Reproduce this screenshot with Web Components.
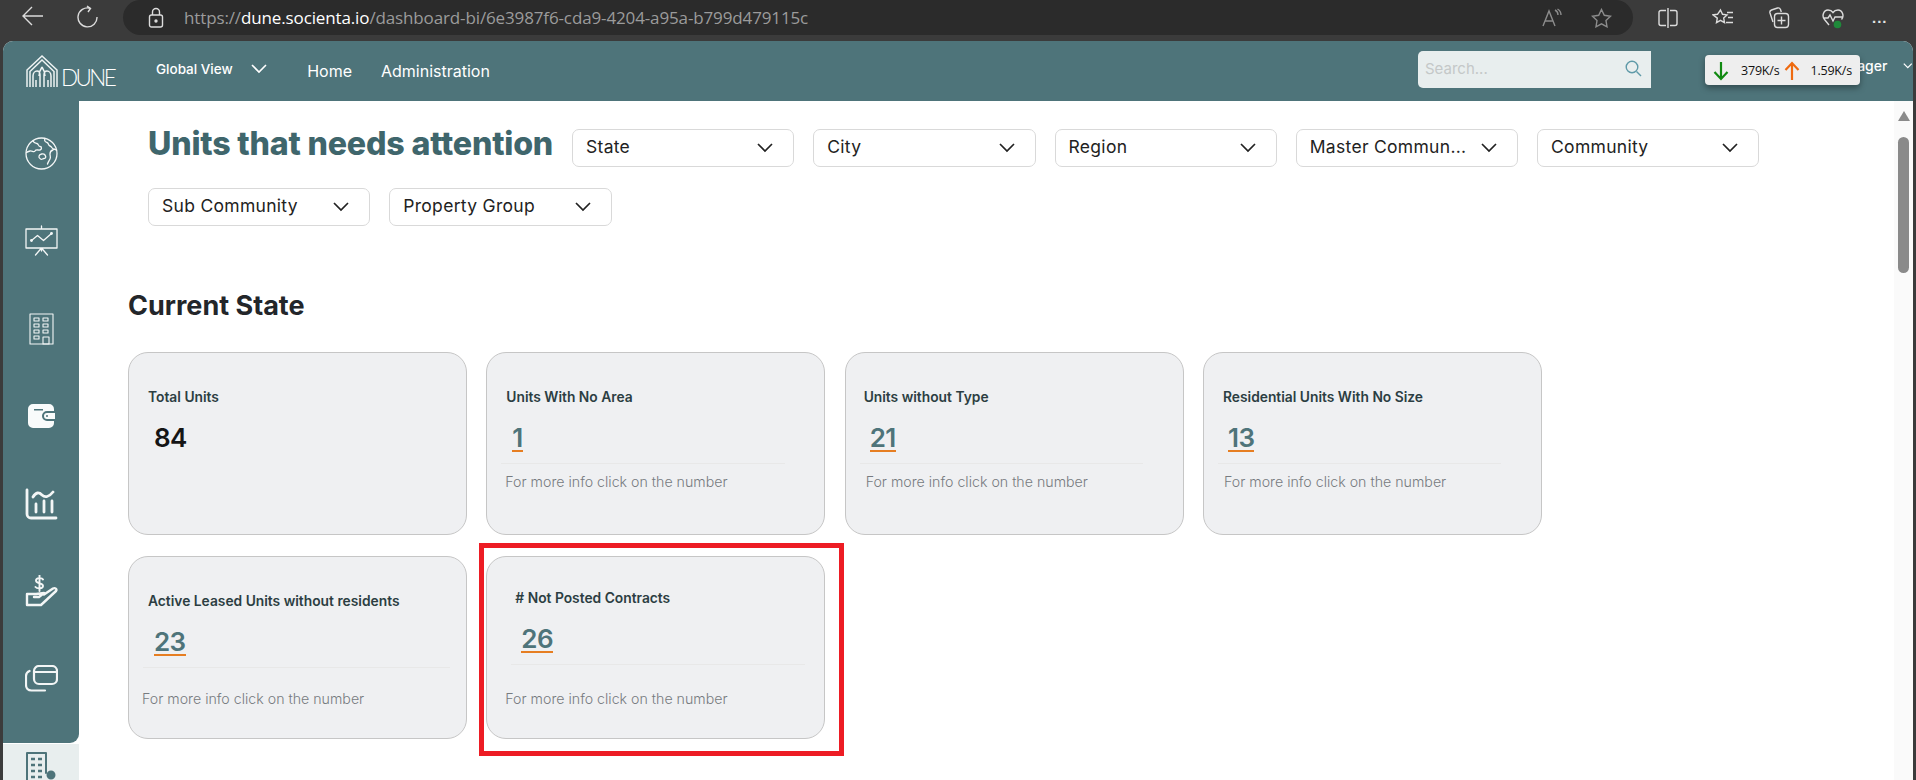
<!DOCTYPE html>
<html lang="en">
<head>
<meta charset="utf-8">
<title>Units that needs attention</title>
<style>
  html, body { height: 100%; margin: 0; overflow: hidden; background: #3b3b3b; }
  body { display: flex; flex-direction: column; font-family: Inter, 'Liberation Sans', sans-serif; }
</style>
</head>
<body>
  <browser-bar></browser-bar>
  <app-window>
    <app-header></app-header>
    <side-nav></side-nav>
    <units-page></units-page>
    <page-scrollbar></page-scrollbar>
  </app-window>

<script>
class BrowserBar extends HTMLElement {
  constructor () {
    super()
    this.shadow = this.attachShadow({ mode: 'open' })
  }

  connectedCallback () {
    this.shadow.innerHTML =
    /* html */`
    <style>
      :host {
        align-items: flex-start;
        background: #3b3b3b;
        display: flex;
        flex: 0 0 41px;
        height: 41px;
      }
      svg { display: block; fill: none; stroke: #dcdcdc; stroke-width: 1.4; }
      .nav { display: flex; gap: 33px; margin: 5px 0 0 21px; width: 102px; }
      .address {
        align-items: center;
        background: #2b2b2b;
        border-radius: 18px;
        display: flex;
        height: 35px;
        width: 1510px;
      }
      .lock { margin-left: 25px; }
      .url {
        color: #9b9b9b;
        flex: 1;
        font-family: 'Open Sans', sans-serif;
        font-size: 17px;
        letter-spacing: -.13px;
        margin-left: 20px;
      }
      .url b { color: #fff; font-weight: 400; }
      .inner { display: flex; gap: 29px; margin-right: 21px; }
      .inner svg { stroke: #8c8c8c; }
      .tools { align-items: center; display: flex; gap: 34px; height: 35px; margin-left: 25px; }
      .heart { margin-left: -2px; }
      .dots { color: #e4e4e4; font: 700 15px 'Liberation Sans', sans-serif; letter-spacing: 1px; margin-left: -6px; }
    </style>
    <div class="nav">
      <svg width="23" height="22" viewBox="0 0 23 22"><path d="M22 11H2M11 2l-9 9 9 9"/></svg>
      <svg width="22" height="24" viewBox="0 0 22 24"><path d="M13 3.2A9.5 9.5 0 1 0 20 12M10 1l3.5 2.4L11 7"/></svg>
    </div>
    <div class="address">
      <svg class="lock" width="16" height="22" viewBox="0 0 16 22"><rect x="1.5" y="8" width="13" height="12" rx="2"/><path d="M4.5 8V5a3.5 3.5 0 0 1 7 0v3"/><circle cx="8" cy="14" r="1" fill="#dcdcdc"/></svg>
      <span class="url">https://<b>dune.socienta.io</b>/dashboard-bi/6e3987f6-cda9-4204-a95a-b799d479115c</span>
      <div class="inner">
        <svg width="20" height="20" viewBox="0 0 20 20"><path d="M1 18 7 3l6 15M3.2 13h7.6M13 2c2 1 3 3 3 5M15.500 1c2.500 1.500 3.500 4 3.500 6"/></svg>
        <svg width="21" height="20" viewBox="0 0 21 20"><path d="m10.500 1.500 2.800 5.800 6.200.9-4.500 4.400 1 6.200-5.500-2.900L5 18.800l1-6.200-4.500-4.400 6.200-.9z"/></svg>
      </div>
    </div>
    <div class="tools">
      <svg width="20" height="20" viewBox="0 0 20 20"><path d="M8 2.500H3a2 2 0 0 0-2 2v11a2 2 0 0 0 2 2h5M12 2.500h5a2 2 0 0 1 2 2v11a2 2 0 0 1-2 2h-5M10 0v20"/></svg>
      <svg width="22" height="20" viewBox="0 0 22 20"><path d="m8.500 2 2 4.300 4.500.6-3.300 3.200.8 4.500-4-2.200-4 2.200.8-4.500L1 6.900l4.500-.6zM15 4.500h6M16 9.500h5M14 14.500h7"/></svg>
      <svg width="22" height="22" viewBox="0 0 22 22"><path d="M5 15 2 6c-.4-1.300.3-2.500 1.500-3l6-2c1.300-.4 2.500.3 3 1.500l.8 2.500"/><rect x="6.500" y="6.500" width="14" height="14" rx="3"/><path d="M13.500 9.500v8M9.500 13.500h8"/></svg>
      <svg class="heart" width="22" height="22" viewBox="0 0 22 22"><path d="M7 18 2.500 12.500C-.500 9 1.500 3 6 3c2.500 0 4 1 5 2.500C12 4 13.500 3 16 3c4.500 0 6.500 6 3.500 9.500M1 11h5l2-3 3 6 2-4h8"/><circle cx="15.500" cy="17.500" r="3.800" fill="#1f8a3a" stroke="none"/></svg>
      <span class="dots">...</span>
    </div>
    `
  }
}

class AppWindow extends HTMLElement {
  constructor () {
    super()
    this.shadow = this.attachShadow({ mode: 'open' })
  }

  connectedCallback () {
    this.shadow.innerHTML =
    /* html */`
    <style>
      :host {
        background: #fff;
        border-radius: 10px 10px 0 0;
        display: grid;
        flex: 1;
        grid-template-columns: 76px 1fr 19px;
        grid-template-rows: 60px 1fr;
        margin: 0 3px;
        min-height: 0;
        overflow: hidden;
      }
    </style>
    <slot></slot>
    `
  }
}

class AppHeader extends HTMLElement {
  constructor () {
    super()
    this.shadow = this.attachShadow({ mode: 'open' })
  }

  connectedCallback () {
    this.shadow.innerHTML =
    /* html */`
    <style>
      :host {
        align-items: center;
        background: #4e747a;
        color: #fff;
        display: flex;
        font-size: 14px;
        font-weight: 500;
        grid-column: 1 / -1;
        position: relative;
      }
      svg { display: block; fill: none; }
      .logo { align-items: flex-end; display: flex; gap: 3px; margin-left: 23px; width: 130px; }
      .logo svg { stroke: #eef3f3; stroke-width: 1.5; }
      .logo span {
        font: 300 22.500px/20px Lato, sans-serif;
        letter-spacing: -2.600px;
      }
      .view { align-items: center; display: flex; gap: 18px; margin-bottom: 4px; font-size: 13.500px; }
      .links { display: flex; gap: 29px; margin-left: 40.500px; font-size: 16px; font-weight: 400; }
      .search {
        align-items: center;
        background: #e8eeee;
        border-radius: 5px 0 0 5px;
        box-sizing: content-box;
        color: #c4c8c8;
        display: flex;
        font-size: 15px;
        font-weight: 400;
        height: 34px;
        justify-content: space-between;
        margin-left: auto;
        margin-top: -3px;
        padding: 0 9px 3px 7px;
        width: 217px;
      }
      .search svg { stroke: #5f9aa8; stroke-width: 1.400; }
      .user { display: flex; align-items: center; gap: 16px; margin: -11px 0 0 177px; width: 85px; white-space: nowrap; }
      .net {
        align-items: center;
        background: #eeeeee;
        border-radius: 4px;
        box-shadow: 0 3px 6px rgba(0,0,0,.35);
        box-sizing: border-box;
        color: #111;
        display: flex;
        font: 400 12.500px 'Open Sans', sans-serif;
        height: 30px;
        left: 1702px;
        letter-spacing: -.2px;
        padding-top: 1px;
        position: absolute;
        top: 14px;
        width: 155px;
      }
      .net svg { stroke-width: 2.200; margin-left: 8px; }
      .net .down { margin-right: 12px; stroke: #118a11; }
      .net .up { margin: 0 10px 0 5px; stroke: #ee6a10; }
    </style>
    <div class="logo">
      <svg width="32" height="33" viewBox="0 0 32 33">
        <path d="M1 32V15L16 1l15 14v17M4 32V16.500L16 5l12 11.500V32"/>
        <path d="M7 32V21c0-3 2-5 4-5s3 2 3 4v12M25 32V21c0-3-2-5-4-5s-3 2-3 4v12M16 12c-2 3-3 6-3 9M16 12c2 3 3 6 3 9M10 32v-7M22 32v-7"/>
      </svg>
      <span>DUNE</span>
    </div>
    <div class="view">Global View
      <svg width="16" height="10" viewBox="0 0 16 10" stroke="#fff" stroke-width="1.600"><path d="m1 1 7 7 7-7"/></svg>
    </div>
    <div class="links"><span>Home</span><span>Administration</span></div>
    <div class="search">Search...
      <svg width="17" height="17" viewBox="0 0 17 17"><circle cx="7" cy="7" r="5.800"/><path d="m11.500 11.500 4.500 4.500"/></svg>
    </div>
    <div class="user">Manager
      <svg width="12" height="8" viewBox="0 0 12 8" stroke="#fff" stroke-width="1.600"><path d="m1 1 5 5 5-5"/></svg>
    </div>
    <div class="net">
      <svg class="down" width="16" height="20" viewBox="0 0 16 20"><path d="M8 1v17M1.500 11 8 18l6.500-7"/></svg>379K/s
      <svg class="up" width="16" height="20" viewBox="0 0 16 20"><path d="M8 19V2M1.500 9 8 2l6.500 7"/></svg>1.59K/s
    </div>
    `
  }
}

class SideNav extends HTMLElement {
  constructor () {
    super()
    this.shadow = this.attachShadow({ mode: 'open' })
  }

  connectedCallback () {
    this.shadow.innerHTML =
    /* html */`
    <style>
      :host { display: flex; flex-direction: column; min-height: 0; overflow: hidden; }
      .rail {
        background: #4e747a;
        border-bottom-right-radius: 9px;
        box-sizing: border-box;
        display: flex;
        flex: 0 0 642px;
        flex-direction: column;
        padding-top: 9px;
      }
      .cell { align-items: center; display: flex; flex: 0 0 87.500px; justify-content: center; }
      svg { display: block; fill: none; stroke: #f3f6f6; stroke-linecap: round; stroke-linejoin: round; }
      .tile { background: #e8eeee; display: flex; flex: 1; justify-content: center; margin-top: 1px; padding-top: 7px; }
      .tile svg { stroke: #4e747a; stroke-width: 2; }
    </style>
    <div class="rail">
      <div class="cell">
        <svg width="33" height="33" viewBox="0 0 33 33" stroke-width="1.300">
          <circle cx="16.500" cy="16.500" r="15.500"/>
          <path d="M8 4c1 2 2 2 4 2.500s1 3 3 3 2 3 0 3.500-4-1-5 1-3-.5-5 0-3 1-3.500 1.500"/>
          <path d="M20 1.500c-1 2 0 3.500 2 4s1 3 3 3.500 2 3 3.500 3 2.500.5 3 1.500M28 13c-2 .5-3 2-3 4s1 3 0 5-2 3-2.500 5"/>
          <path d="M14 19c.5-2 4.500-3 6-1s.5 3.500-1 3.500-2 1.500-3.500.5-2-1.500-1.500-3z"/>
        </svg>
      </div>
      <div class="cell">
        <svg width="33" height="32" viewBox="0 0 33 32" stroke-width="1.300">
          <path d="M1 4h31v19H1zM16.500 1v3M16.500 23l-6 7M16.500 23l6 7M16.500 23v3"/>
          <path d="m6.500 15.500 6-5 6 5 8-7" />
          <circle cx="6.500" cy="15.500" r=".8" fill="#f3f6f6"/><circle cx="26.500" cy="8.500" r=".8" fill="#f3f6f6"/>
        </svg>
      </div>
      <div class="cell">
        <svg width="25" height="32" viewBox="0 0 25 32" stroke-width="1.100">
          <path d="M1 1h23v30H1z"/>
          <path d="M5 5h5v3H5zM14 5h5v3h-5zM5 11h5v3H5zM14 11h5v3h-5zM5 17h5v3H5zM14 17h5v3h-5zM5 23h5v3H5zM14 24h6v7h-6z"/>
        </svg>
      </div>
      <div class="cell">
        <svg width="28" height="24" viewBox="0 0 28 24" style="stroke:none">
          <path fill="#f9fbfb" fill-rule="evenodd" d="M6 0h16a5 5 0 0 1 5 5v2h-7a5 5 0 0 0 0 10h7v2a5 5 0 0 1-5 5H6a5 5 0 0 1-5-5V5a5 5 0 0 1 5-5zM7 5v1.500h9V5z"/>
          <path fill="#f9fbfb" fill-rule="evenodd" d="M20 9h8v6h-8a3 3 0 0 1 0-6zm0 2a1 1 0 1 0 0 2 1 1 0 0 0 0-2z"/>
        </svg>
      </div>
      <div class="cell">
        <svg width="33" height="32" viewBox="0 0 33 32" stroke-width="2.800">
          <path d="M2 2v24a4 4 0 0 0 4 4h25M8 9c3-5 6-5 9-2s7 2 11-3M11 16v8M19 13v11M27 13v11"/>
        </svg>
      </div>
      <div class="cell">
        <svg width="33" height="32" viewBox="0 0 33 32" stroke-width="2.400">
          <path d="M2 19h9l8-1-5 4h-5M2 19v11h14l15-14c1.500-2-1-3.500-3-2.500l-9 6"/>
          <path d="M18 4.500c-1-2-7-2-7 1 0 3.500 7 2 7 5.500 0 3-6 3-7.500 1M14.500 0v16" stroke-width="1.900"/>
        </svg>
      </div>
      <div class="cell">
        <svg width="33" height="27" viewBox="0 0 33 27" stroke-width="2.200">
          <rect x="9" y="1" width="23" height="18" rx="5"/>
          <path d="M9 7h23"/>
          <path d="M4.500 6C2 7 1 9 1 11v9c0 3 2 5.500 5.500 5.500H20"/>
        </svg>
      </div>
    </div>
    <div class="tile">
      <svg width="33" height="40" viewBox="0 0 33 40">
        <path d="M19 36H2V2h19v20"/>
        <path d="M6 8h4M13 8h4M6 14h4M13 14h4M6 20h4M13 20h4M6 26h4M13 26h4" stroke-width="2.600" stroke-linecap="butt"/>
        <circle cx="26" cy="24" r="3.500" fill="#4e747a"/>
      </svg>
    </div>
    `
  }
}

class UnitsPage extends HTMLElement {
  constructor () {
    super()
    this.shadow = this.attachShadow({ mode: 'open' })
  }

  connectedCallback () {
    this.shadow.innerHTML =
    /* html */`
    <style>
      :host { display: block; min-height: 0; overflow: hidden; padding: 28px 0 0 49px; }
      .filters { display: flex; flex-wrap: wrap; gap: 21px 19px; padding-left: 20px; }
      h1 {
        color: #3f666c;
        font-size: 32.200px;
        font-weight: 800;
        letter-spacing: -.2px;
        line-height: 29px;
        margin: 0;
        white-space: nowrap;
        width: 405px;
      }
      h2 {
        color: #23262a;
        font-size: 27px;
        font-weight: 700;
        line-height: 36px;
        margin: 62px 0 28px;
      }
      .cards {
        display: grid;
        gap: 21px 19.330px;
        grid-template-columns: repeat(4, 339px);
      }
    </style>
    <div class="filters">
      <h1>Units that needs attention</h1>
      <filter-select>State</filter-select>
      <filter-select>City</filter-select>
      <filter-select>Region</filter-select>
      <filter-select>Master Commun...</filter-select>
      <filter-select>Community</filter-select>
      <filter-select>Sub Community</filter-select>
      <filter-select>Property Group</filter-select>
    </div>
    <h2>Current State</h2>
    <section class="cards">
      <stat-card value="84" plain>Total Units</stat-card>
      <stat-card value="1" style="--num-x:25px;--div-w:284px;--help-x:18px">Units With No Area</stat-card>
      <stat-card value="21" style="--title-x:18px;--num-x:24px;--div-w:283px;--help-x:20px">Units without Type</stat-card>
      <stat-card value="13" style="--num-x:24px;--div-w:283px;--help-x:20px">Residential Units With No Size</stat-card>
      <stat-card value="23" style="--top:34px;--div-w:307px;--help-y:21px;--help-x:13px">Active Leased Units without residents</stat-card>
      <stat-card value="26" marked style="--top:31px;--title-x:28px;--num-x:34px;--div-x:24px;--div-w:294px;--help-x:18px;--help-y:24px">Not Posted Contracts</stat-card>
    </section>
    `
  }
}

class FilterSelect extends HTMLElement {
  constructor () {
    super()
    this.shadow = this.attachShadow({ mode: 'open' })
  }

  connectedCallback () {
    this.shadow.innerHTML =
    /* html */`
    <style>
      :host {
        align-items: center;
        background: #fff;
        border: 1px solid #d9d9d9;
        border-radius: 7px;
        box-sizing: border-box;
        color: #222;
        display: flex;
        font-size: 17.500px;
        height: 38px;
        justify-content: space-between;
        letter-spacing: .3px;
        padding: 0 20px 3px 13px;
        width: 222.250px;
      }
      span { white-space: nowrap; }
      svg { display: block; fill: none; stroke: #222; stroke-width: 1.700; flex: none; margin-top: 3px; }
    </style>
    <span><slot></slot></span>
    <svg width="16" height="10" viewBox="0 0 16 10"><path d="m1 1 7 7 7-7"/></svg>
    `
  }
}

class StatCard extends HTMLElement {
  constructor () {
    super()
    this.shadow = this.attachShadow({ mode: 'open' })
  }

  connectedCallback () {
    const plain = this.hasAttribute('plain')
    const marked = this.hasAttribute('marked')
    this.shadow.innerHTML =
    /* html */`
    <style>
      :host {
        background: #eff0f2;
        border: 1px solid #c6c6c6;
        border-radius: 20px;
        box-sizing: border-box;
        display: flex;
        flex-direction: column;
        height: 183px;
        padding-top: var(--top, 34px);
        position: relative;
      }
      .title {
        color: #2c3e42;
        font-size: 13.800px;
        font-weight: 600;
        line-height: 20px;
        margin-left: var(--title-x, 19px);
      }
      .num {
        align-self: flex-start;
        border-bottom: 2px solid #e67e22;
        color: #4e747a;
        font-size: 26px;
        font-weight: 600;
        letter-spacing: -.6px;
        line-height: 25px;
        margin: 18px 0 0 var(--num-x, 25px);
      }
      .num.plain { border-bottom-color: transparent; color: #151515; }
      hr {
        border: 0;
        border-top: 1px solid #e8e8e8;
        margin: 11px 0 0 var(--div-x, 14px);
        width: var(--div-w, 283px);
      }
      .help {
        color: #777b80;
        font-size: 14.200px;
        font-weight: 300;
        line-height: 20px;
        margin: var(--help-y, 8px) 0 0 var(--help-x, 13px);
        white-space: nowrap;
      }
      .mark {
        border: 5px solid #ed1c24;
        bottom: -18px;
        left: -8px;
        pointer-events: none;
        position: absolute;
        right: -20px;
        top: -14px;
      }
    </style>
    <div class="title">${marked ? '# ' : ''}<slot></slot></div>
    <div class="num ${plain ? 'plain' : ''}">${this.getAttribute('value')}</div>
    ${plain ? '' : '<hr><div class="help">For more info click on the number</div>'}
    ${marked ? '<div class="mark"></div>' : ''}
    `
  }
}

class PageScrollbar extends HTMLElement {
  constructor () {
    super()
    this.shadow = this.attachShadow({ mode: 'open' })
  }

  connectedCallback () {
    this.shadow.innerHTML =
    /* html */`
    <style>
      :host { background: #fafafa; display: flex; flex-direction: column; align-items: center; padding-top: 10px; }
      .arrow { border: 6.500px solid transparent; border-bottom: 10px solid #8a8a8a; border-top: 0; }
      .thumb { background: #8a8a8a; border-radius: 6px; height: 136px; margin-top: 16px; width: 11px; }
    </style>
    <div class="arrow"></div>
    <div class="thumb"></div>
    `
  }
}

customElements.define('browser-bar', BrowserBar)
customElements.define('app-window', AppWindow)
customElements.define('app-header', AppHeader)
customElements.define('side-nav', SideNav)
customElements.define('units-page', UnitsPage)
customElements.define('filter-select', FilterSelect)
customElements.define('stat-card', StatCard)
customElements.define('page-scrollbar', PageScrollbar)
</script>
</body>
</html>
